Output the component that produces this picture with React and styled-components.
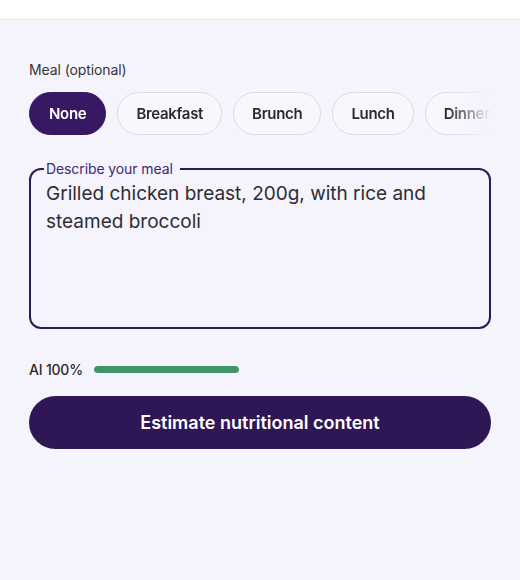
import React, { useState } from "react";
import styled, { createGlobalStyle } from "styled-components";

const Global = createGlobalStyle`
  html, body { margin: 0; padding: 0; background: #f5f3fc; }
  body { font-family: Inter, "Noto Sans", sans-serif; color: #2b2b2e; }
  * { box-sizing: border-box; }
`;

const Page = styled.div`
  min-height: 580px;
  background: #f5f3fc;
`;

const TopBar = styled.div`
  height: 20px;
  background: #ffffff;
  border-bottom: 1px solid #e5e3ed;
`;

const Content = styled.div`
  padding: 40px 29px 0;
  display: flex;
  flex-direction: column;
`;

const FieldLabel = styled.div`
  font-size: 14px;
  line-height: 20px;
  color: #35333a;
  letter-spacing: -0.1px;
`;

const ChipRow = styled.div`
  display: flex;
  gap: 11px;
  margin-top: 12px;
  overflow: hidden;
  -webkit-mask-image: linear-gradient(to right, #000 calc(100% - 44px), transparent 100%);
  mask-image: linear-gradient(to right, #000 calc(100% - 44px), transparent 100%);
`;

const Chip = styled.button`
  flex: none;
  height: 43px;
  padding: 0 ${(p) => (p.$active ? "19px" : "18px")};
  border-radius: 999px;
  font-family: inherit;
  font-size: 15px;
  font-weight: 600;
  letter-spacing: -0.3px;
  cursor: pointer;
  border: 1px solid ${(p) => (p.$active ? "#371863" : "#dcdae3")};
  background: ${(p) => (p.$active ? "#371863" : "#f8f7fc")};
  color: ${(p) => (p.$active ? "#ffffff" : "#2b2a2f")};
`;

const Fieldset = styled.fieldset`
  margin: 25px 0 0;
  padding: 0 15px 12px;
  border: 2px solid #2f1a57;
  border-radius: 12px;
  height: 169px;
  display: flex;
`;

const Legend = styled.legend`
  font-size: 14px;
  line-height: 17px;
  color: #3d2a74;
  padding: 0 7px 0 2px;
  margin-left: -2px;
  letter-spacing: -0.1px;
`;

const TextArea = styled.textarea`
  flex: 1;
  border: none;
  outline: none;
  resize: none;
  background: transparent;
  font-family: inherit;
  font-size: 19px;
  line-height: 28px;
  color: #2e2d33;
  padding: 0;
  margin-top: 3px;
  letter-spacing: 0;
`;

const AiRow = styled.div`
  display: flex;
  align-items: center;
  gap: 11px;
  margin-top: 32px;
`;

const AiLabel = styled.span`
  font-size: 14px;
  font-weight: 500;
  color: #2b2a2f;
  letter-spacing: -0.2px;
`;

const Track = styled.div`
  width: 145px;
  height: 7px;
  border-radius: 4px;
  background: #dcdae3;
  overflow: hidden;
`;

const Fill = styled.div`
  height: 100%;
  background: #3f946b;
  border-radius: 4px;
`;

const Primary = styled.button`
  margin-top: 18px;
  height: 53px;
  border: none;
  border-radius: 999px;
  background: #2f1655;
  color: #ffffff;
  font-family: inherit;
  font-size: 18px;
  font-weight: 600;
  letter-spacing: 0;
  cursor: pointer;
`;

const meals = ["None", "Breakfast", "Brunch", "Lunch", "Dinner"];

export default function App() {
  const [meal, setMeal] = useState("None");
  const [text, setText] = useState(
    "Grilled chicken breast, 200g, with rice and steamed broccoli"
  );
  const ai = 100;
  return (
    <Page>
      <Global />
      <TopBar />
      <Content>
        <FieldLabel>Meal (optional)</FieldLabel>
        <ChipRow>
          {meals.map((m) => (
            <Chip key={m} $active={m === meal} onClick={() => setMeal(m)}>
              {m}
            </Chip>
          ))}
        </ChipRow>
        <Fieldset>
          <Legend>Describe your meal</Legend>
          <TextArea value={text} onChange={(e) => setText(e.target.value)} />
        </Fieldset>
        <AiRow>
          <AiLabel>AI {ai}%</AiLabel>
          <Track>
            <Fill style={{ width: `${ai}%` }} />
          </Track>
        </AiRow>
        <Primary>Estimate nutritional content</Primary>
      </Content>
    </Page>
  );
}
